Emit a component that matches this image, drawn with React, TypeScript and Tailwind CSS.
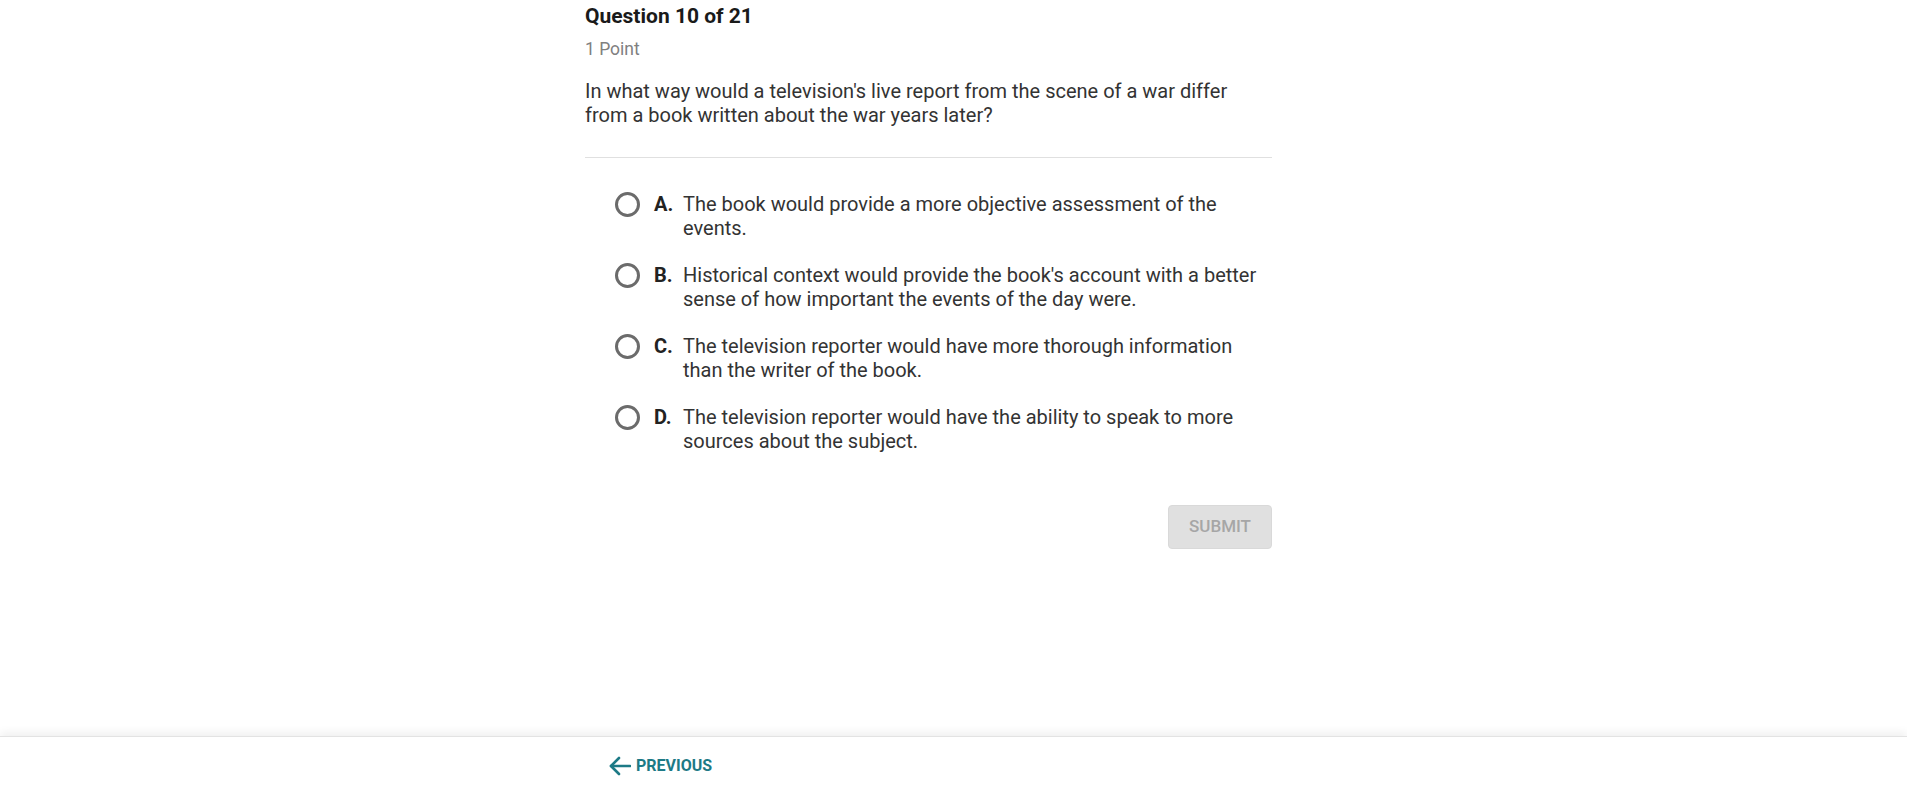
import React from "react";

const options = [
  { letter: "A.", text: "The book would provide a more objective assessment of the events." },
  { letter: "B.", text: "Historical context would provide the book's account with a better sense of how important the events of the day were." },
  { letter: "C.", text: "The television reporter would have more thorough information than the writer of the book." },
  { letter: "D.", text: "The television reporter would have the ability to speak to more sources about the subject." },
];

export default function App() {
  return (
    <div className="flex h-[794px] w-full flex-col bg-white font-['Roboto','Liberation_Sans',sans-serif]">
      <div className="flex-1">
        <div className="ml-[585px] w-[687px]">
          <h1 className="pt-[3px] text-[21px] font-bold leading-[26px] text-[#1a1a1a]">Question 10 of 21</h1>
          <div className="mt-[10px] text-[17.5px] leading-[20px] text-[#808080]">1 Point</div>
          <p className="mt-[20px] w-[660px] text-[20px] leading-[24px] text-[#333333]">
            In what way would a television's live report from the scene of a war differ from a book written about the war years later?
          </p>
          <div className="mt-[30px] h-px bg-[#e0e0e0]" />
          <div className="mt-[34px] flex flex-col gap-[23px] pl-[30px]">
            {options.map((o) => (
              <div key={o.letter} className="flex items-start">
                <div className="mt-[0px] h-[25px] w-[25px] shrink-0 rounded-full border-[3px] border-[#6b6b6b]" />
                <span className="ml-[14px] w-[29px] shrink-0 text-[20px] font-bold leading-[24px] text-[#222222]">{o.letter}</span>
                <span className="w-[585px] text-[20px] leading-[24px] text-[#333333]">{o.text}</span>
              </div>
            ))}
          </div>
          <div className="mt-[52px] flex justify-end">
            <button className="h-[44px] w-[104px] rounded-[4px] border border-[#d9d9d9] bg-[#e0e0e0] text-[17px] font-medium text-[#a6a6a6]">
              SUBMIT
            </button>
          </div>
        </div>
      </div>
      <div className="h-[58px] border-t border-[#e3e3e3] shadow-[0_-4px_8px_rgba(0,0,0,0.06)]">
        <div className="ml-[609px] flex h-full items-center gap-[5px]">
          <svg width="22" height="20" viewBox="0 0 22 20" fill="none" stroke="#1d7a86" strokeWidth="2.6" strokeLinecap="round" strokeLinejoin="round">
            <path d="M21 10H2" />
            <path d="M10 2L2 10l8 8" />
          </svg>
          <span className="text-[16px] font-bold text-[#1d7a86]">PREVIOUS</span>
        </div>
      </div>
    </div>
  );
}
